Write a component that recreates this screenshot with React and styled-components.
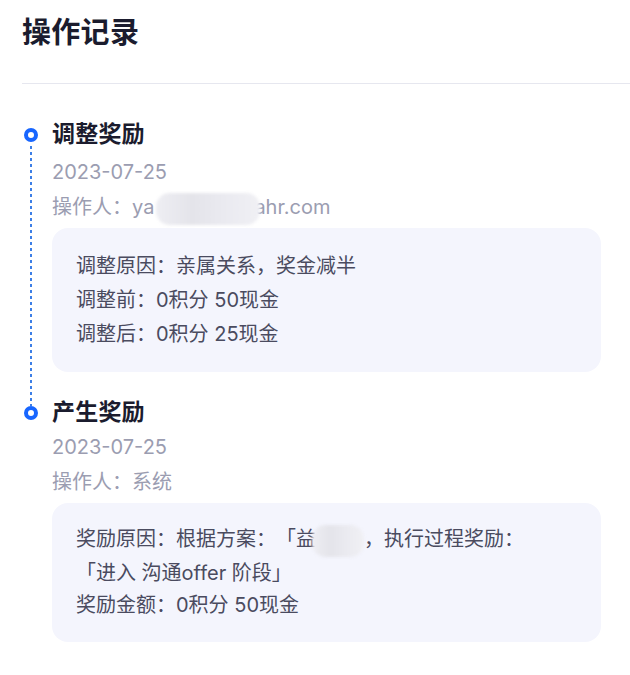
import React from 'react'
import styled, { createGlobalStyle } from 'styled-components'

const GlobalStyle = createGlobalStyle`
    html, body {
        margin: 0;
        padding: 0;
        background: #ffffff;
    }
    body {
        font-family: Inter, "Noto Sans CJK SC", "Noto Sans", sans-serif;
        -webkit-font-smoothing: antialiased;
        text-spacing-trim: space-all;
    }
`

const Page = styled.div`
    width: 630px;
    min-height: 675px;
    box-sizing: border-box;
    padding: 13px 0 0 22px;
    background: #ffffff;
`

const Heading = styled.h1`
    margin: 0;
    font-size: 29px;
    line-height: 40px;
    font-weight: 700;
    color: #1b1c2e;
    letter-spacing: 0.3px;
`

const Divider = styled.div`
    margin-top: 30px;
    height: 1px;
    background: #e6e7ef;
`

const Timeline = styled.div`
    display: flex;
    flex-direction: column;
    gap: 24px;
    padding: 34px 29px 0 0;
`

const Item = styled.div`
    display: flex;
    gap: 12px;
`

const Rail = styled.div`
    width: 18px;
    flex: none;
    display: flex;
    flex-direction: column;
    align-items: center;
    padding-top: 10px;
    margin-bottom: ${p => (p.$last ? 0 : -34)}px;
`

const Dot = styled.span`
    width: 14px;
    height: 14px;
    box-sizing: border-box;
    border-radius: 50%;
    border: 4.5px solid #1866ff;
    background: #ffffff;
    flex: none;
`

const Dash = styled.span`
    flex: 1;
    width: 2px;
    margin-top: 4px;
    background: repeating-linear-gradient(
        to bottom,
        #3d7fe6 0 3px,
        transparent 3px 6px
    );
`

const Body = styled.div`
    flex: 1;
    min-width: 0;
`

const Title = styled.div`
    font-size: 23px;
    line-height: 32px;
    font-weight: 600;
    color: #1b1c2e;
    letter-spacing: 0.2px;
`

const Meta = styled.div`
    font-size: 20px;
    line-height: 35px;
    color: #9b9db1;
    margin-top: ${p => p.$top || 0}px;
`

const Masked = styled.span`
    display: inline-block;
    width: ${p => p.$w}px;
    height: 32px;
    margin: 0 ${p => p.$mr || 0}px 0 ${p => p.$ml || 0}px;
    vertical-align: middle;
    border-radius: 14px;
    background: linear-gradient(90deg, #eeeef3 0%, #e4e4ea 35%, #eaeaf0 65%, #f0f0f4 100%);
    filter: blur(1.5px);
`

const Card = styled.div`
    margin-top: 3px;
    padding: ${p => p.$pad || '21px 24px'};
    border-radius: 16px;
    background: #f4f5fd;
    font-size: 20px;
    line-height: ${p => p.$lh || 34}px;
    color: #4a4b5f;
`

const Line = styled.div``

const NoWrap = styled.span`
    white-space: nowrap;
`

const records = [
    {
        title: '调整奖励',
        date: '2023-07-25',
        gap: 5,
        operator: (
            <>
                操作人：ya<Masked $w={104} $ml={2} $mr={-6} />ahr.com
            </>
        ),
        lines: ['调整原因：亲属关系，奖金减半', '调整前：0积分 50现金', '调整后：0积分 25现金'],
    },
    {
        title: '产生奖励',
        date: '2023-07-25',
        gap: 2,
        operator: '操作人：系统',
        pad: '20px 24px 21px',
        lh: 32,
        lines: [
            <>
                奖励原因：根据方案：「益<Masked $w={52} $ml={-4} />，执行过程奖励：
                <NoWrap>「进入 沟通offer 阶段」</NoWrap>
            </>,
            '奖励金额：0积分 50现金',
        ],
    },
]

function App() {
    return (
        <Page>
            <GlobalStyle />
            <Heading>操作记录</Heading>
            <Divider />
            <Timeline>
                {records.map((r, i) => (
                    <Item key={i}>
                        <Rail $last={i === records.length - 1}>
                            <Dot />
                            {i < records.length - 1 && <Dash />}
                        </Rail>
                        <Body>
                            <Title>{r.title}</Title>
                            <Meta $top={r.gap}>{r.date}</Meta>
                            <Meta>{r.operator}</Meta>
                            <Card $pad={r.pad} $lh={r.lh}>
                                {r.lines.map((l, j) => (
                                    <Line key={j}>{l}</Line>
                                ))}
                            </Card>
                        </Body>
                    </Item>
                ))}
            </Timeline>
        </Page>
    )
}

export default App
